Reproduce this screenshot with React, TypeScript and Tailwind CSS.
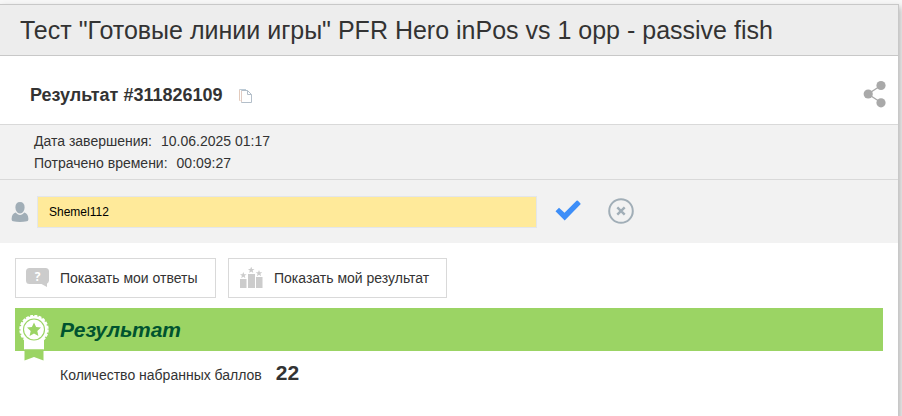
import type { ReactNode } from 'react';

const details = [
  { label: 'Дата завершения:', value: '10.06.2025 01:17' },
  { label: 'Потрачено времени:', value: '00:09:27' },
];

function CopyIcon() {
  return (
    <svg width="14" height="16" viewBox="0 0 14 16" fill="none">
      <path d="M2.500 12.500H1.500V1.500" stroke="#e3cbbd" />
      <path d="M1.500 1.500h6.500" stroke="#bccbd6" />
      <path d="M3.500 2.500h6l4 4v8h-10z" fill="#fff" stroke="#b3bec9" />
      <path d="M3.500 3v11" stroke="#e0cbc3" />
      <path d="M9.500 2.500v4h4" stroke="#b3bec9" />
    </svg>
  );
}

function ShareIcon() {
  return (
    <svg width="24" height="28" viewBox="0 0 24 28" fill="#a9a9a9">
      <path d="M18 5.500 5 14l13 8.500" fill="none" stroke="#a9a9a9" strokeWidth="1.300" />
      <circle cx="18" cy="5.500" r="4.600" />
      <circle cx="5.200" cy="14" r="4.600" />
      <circle cx="18" cy="22.800" r="4.600" />
    </svg>
  );
}

function UserIcon() {
  return (
    <svg width="18" height="22" viewBox="0 0 18 22" fill="#a1aeb7">
      <path d="M9 1c3 0 4.600 2 4.600 5 0 3.400-1.700 6.500-4.600 6.500S4.400 9.400 4.400 6C4.400 3 6 1 9 1z" />
      <path d="M4.800 11.600C5.900 13.200 7.300 14 9 14s3.100-.8 4.200-2.400c2.600.6 4 2.600 4.200 6.100 0 1.500-.4 2.100-1.500 2.500-4.300 1.100-9.500 1.100-13.800 0C1 19.800.600 19.200.600 17.700c.2-3.500 1.600-5.500 4.200-6.100z" />
    </svg>
  );
}

function CheckIcon() {
  return (
    <svg width="26" height="21" viewBox="0 0 26 21">
      <path d="M.500 11.200 4 7.700l5.500 5L21.500.800a1 1 0 0 1 1.400 0L25.300 3.200a1 1 0 0 1 0 1.400L9.700 20.500z" fill="#3d8ef8" />
    </svg>
  );
}

function CancelIcon() {
  return (
    <svg width="26" height="26" viewBox="0 0 26 26" fill="none" stroke="#a1aeb7">
      <circle cx="13" cy="13" r="11.800" strokeWidth="2" />
      <path d="m9.300 9.300 7.400 7.400m0-7.400-7.400 7.400" strokeWidth="2.400" />
    </svg>
  );
}

function AnswersIcon() {
  return (
    <svg width="23" height="20" viewBox="0 0 23 20">
      <path d="M3.500 0h16A3.500 3.500 0 0 1 23 3.500v9a3.500 3.500 0 0 1-2 3.200V19l-5.500-3h-12A3.500 3.500 0 0 1 0 12.500v-9A3.500 3.500 0 0 1 3.500 0z" fill="#ccc" />
      <text x="11.500" y="12.500" textAnchor="middle" fill="#fff" className="font-['Open_Sans',sans-serif] text-[12px] font-bold">?</text>
    </svg>
  );
}

const STAR = 'M0-3.400.9-1.100 3.300-1 1.400.500 2.100 2.900 0 1.500-2.100 2.900-1.400.500-3.300-1-.9-1.100z';

function RatingIcon() {
  return (
    <svg width="23" height="22" viewBox="0 0 23 22" fill="#ccc">
      <path d="M0 12h6.500v9H0zM8 7h7v14H8zM16 10h6.500v11H16z" />
      <path d={STAR} transform="translate(3.300 8.300)" />
      <path d={STAR} transform="translate(11.200 3)" />
      <path d={STAR} transform="translate(19 6.300)" />
    </svg>
  );
}

function MedalIcon() {
  return (
    <svg width="30" height="47" viewBox="0 0 30 47">
      <path d="M5 24h20v10.500H5z" fill="#fff" />
      <path d="M5.500 34.500h19v11L15 42l-9.500 3.500z" fill="#9bd464" />
      <circle cx="15" cy="14.500" r="13.500" fill="#fff" />
      <circle cx="15" cy="14.500" r="13.700" fill="none" stroke="#fff" strokeWidth="2" strokeDasharray="3 1.300" />
      <circle cx="15" cy="14.500" r="10.500" fill="none" stroke="#9bd464" strokeWidth="1.100" />
      <path d="m15 7.500 2.100 4.500 4.900.600-3.700 3.400 1.100 4.900-4.400-2.500-4.400 2.500 1.100-4.900L8 12.600l4.900-.6z" fill="#9bd464" />
    </svg>
  );
}

function ActionButton({ icon, className, children }: { icon: ReactNode; className: string; children: ReactNode }) {
  return (
    <button className={`flex h-10 items-center border border-[#d9d9d9] bg-white text-sm ${className}`}>
      <span className="flex w-[34px] shrink-0">{icon}</span>
      <span className="whitespace-nowrap">{children}</span>
    </button>
  );
}

export default function App() {
  return (
    <div className="h-[416px] w-[902px] overflow-hidden bg-[#f7f7f7] pt-1 font-['Liberation_Sans',Arial,sans-serif] text-[#333]">
      <main className="h-[420px] w-[899px] border-t border-r border-[#c8c8c8] bg-white shadow-[2px_3px_6px_rgba(0,0,0,0.25)]">
        <header className="flex h-[51px] items-center border-b border-[#c8c8c8] bg-[#ededed] pl-5">
          <h1 className="whitespace-nowrap text-[25px] leading-8">
            Тест "Готовые линии игры" PFR Hero inPos vs 1 opp - passive fish
          </h1>
        </header>

        <section className="flex h-[68px] items-center pt-2.5 pr-2.5 pl-[30px]">
          <h2 className="text-lg font-bold">Результат #311826109</h2>
          <button className="mt-0.5 ml-[15px]" aria-label="Копировать">
            <CopyIcon />
          </button>
          <button className="mr-px mb-[3px] ml-auto" aria-label="Поделиться">
            <ShareIcon />
          </button>
        </section>

        <section className="h-14 border-y border-[#d9d9d9] bg-[#f2f2f2] pt-[5px] pl-[34px] text-sm leading-[22px]">
          {details.map((item) => (
            <div key={item.label} className="flex gap-[9px]">
              <span>{item.label}</span>
              <span>{item.value}</span>
            </div>
          ))}
        </section>

        <section className="flex h-[63px] items-center bg-[#f2f2f2] pl-[11px]">
          <UserIcon />
          <input
            type="text"
            defaultValue="Shemel112"
            className="ml-2 h-8 w-[500px] border border-[#e3e6ea] bg-[#ffea9a] pl-[11px] text-xs text-black"
          />
          <button className="mb-0.5 ml-[18px]" aria-label="Сохранить">
            <CheckIcon />
          </button>
          <button className="mb-0.5 ml-[27px]" aria-label="Отмена">
            <CancelIcon />
          </button>
        </section>

        <div className="flex gap-3 pt-[15px] pl-[15px]">
          <ActionButton icon={<AnswersIcon />} className="w-[201px] pl-2.5">
            Показать мои ответы
          </ActionButton>
          <ActionButton icon={<RatingIcon />} className="w-[219px] pl-[11px]">
            Показать мой результат
          </ActionButton>
        </div>

        <section className="mt-2.5 mr-[15px] ml-[15px]">
          <div className="relative flex h-[43px] items-center bg-[#9bd464] pl-[45px]">
            <span className="absolute top-[7px] left-[4px]">
              <MedalIcon />
            </span>
            <h3 className="text-[21px] font-bold text-[#00532f] italic">Результат</h3>
          </div>
          <div className="flex items-baseline gap-3.5 pt-1.5 pl-[45px]">
            <span className="text-sm">Количество набранных баллов</span>
            <span className="text-[21px] font-bold">22</span>
          </div>
        </section>
      </main>
    </div>
  );
}
